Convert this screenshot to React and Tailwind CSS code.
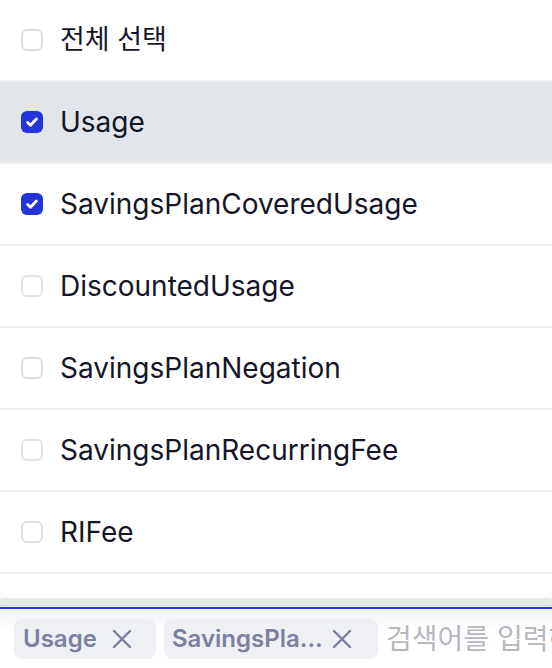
import React, { useState } from 'react';

const OPTIONS = [
  'Usage',
  'SavingsPlanCoveredUsage',
  'DiscountedUsage',
  'SavingsPlanNegation',
  'SavingsPlanRecurringFee',
  'RIFee',
];

function Checkbox({ checked }) {
  return (
    <span
      className={`flex h-[22px] w-[22px] shrink-0 items-center justify-center rounded-[6px] ${
        checked ? 'bg-[#2334d8]' : 'border-2 border-[#e0e2e9] bg-white'
      }`}
    >
      {checked && (
        <svg width="16" height="16" viewBox="0 0 16 16" fill="none">
          <path d="M3.6 8.4l2.9 2.8L12.4 5" stroke="white" strokeWidth="2.8" strokeLinecap="round" strokeLinejoin="round" />
        </svg>
      )}
    </span>
  );
}

function XIcon() {
  return (
    <svg width="20" height="20" viewBox="0 0 20 20" fill="none" className="shrink-0">
      <path d="M2 2l16 16M18 2L2 18" stroke="#7b80a3" strokeWidth="2.4" strokeLinecap="round" />
    </svg>
  );
}

export default function App() {
  const [selected] = useState(['Usage', 'SavingsPlanCoveredUsage']);
  const hovered = 'Usage';

  return (
    <div
      className="flex h-[668px] w-[552px] flex-col overflow-hidden bg-white text-[#141628]"
      style={{ fontFamily: 'Inter, "Noto Sans CJK KR", sans-serif' }}
    >
      {/* dropdown list */}
      <div className="relative z-10 flex flex-col rounded-b-[10px] bg-white shadow-[0_2px_6px_rgba(0,0,0,0.06)]">
        <div className="flex h-[80px] items-center gap-[17px] px-[21px] text-[27px]">
          <Checkbox checked={false} />
          <span>전체 선택</span>
        </div>
        {OPTIONS.map((opt) => (
          <div
            key={opt}
            className={`flex h-[82px] items-center gap-[17px] border-t-2 border-[#eff0f2] px-[21px] text-[28px] ${
              opt === hovered ? 'bg-[#e2e5ea]' : ''
            }`}
          >
            <Checkbox checked={selected.includes(opt)} />
            <span>{opt}</span>
          </div>
        ))}
        <div className="h-[26px] rounded-b-[10px] border-t-2 border-[#eff0f2]" />
      </div>

      {/* gap shadow */}
      <div className="h-[9px] shrink-0 bg-gradient-to-b from-[#eceef1] to-[#e4e5e8]" />

      {/* input */}
      <div className="flex flex-1 items-start gap-2 border-t-2 border-[#2a3bd6] bg-gradient-to-b from-[#f3f4f6] to-white to-40% pl-[14px] pt-[10px]">
        <span className="flex h-[40px] w-[142px] shrink-0 items-center justify-between rounded-[8px] bg-[#eff0f3] pl-[9px] pr-[24px] text-[24px] font-semibold text-[#7b80a3]">
          Usage
          <XIcon />
        </span>
        <span className="flex h-[40px] w-[214px] shrink-0 items-center justify-between rounded-[8px] bg-[#eff0f3] pl-[8px] pr-[26px] text-[24px] font-semibold text-[#7b80a3]">
          SavingsPla...
          <XIcon />
        </span>
        <span className="flex h-[40px] shrink-0 items-center whitespace-nowrap text-[28px] text-[#b5b8bf]">
          검색어를 입력하세요
        </span>
      </div>
    </div>
  );
}
